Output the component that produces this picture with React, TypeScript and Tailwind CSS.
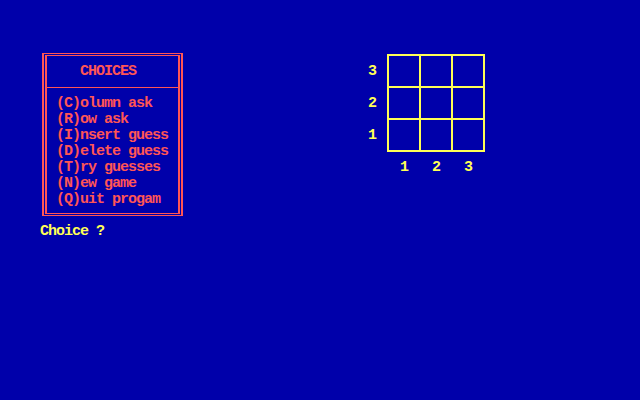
import React from 'react';

const menu = [
  '(C)olumn ask',
  '(R)ow ask',
  '(I)nsert guess',
  '(D)elete guess',
  '(T)ry guesses',
  '(N)ew game',
  '(Q)uit progam',
];

const App = () => {
  return (
    <div
      className="w-[640px] h-[400px] bg-[#0000aa] flex items-start overflow-hidden text-[15px] leading-[16px] tracking-[-1px] font-bold"
      style={{ fontFamily: '"Liberation Mono", "DejaVu Sans Mono", monospace' }}
    >
      {/* menu column */}
      <div className="w-[184px] pl-[40px] pt-[53px] flex flex-col">
        <div className="ml-[2px] w-[141px] h-[163px] border-x-2 border-y border-[#ff5555] p-[1px]">
          <div className="w-full h-full border-x-2 border-y border-[#ff5555] text-[#ff5555]">
            <div className="pt-[8px] pl-[33px] whitespace-pre">CHOICES</div>
            <div className="mt-[7px] h-px bg-[#ff5555]" />
            <div className="pt-[8px] pl-[9px] flex flex-col">
              {menu.map((item) => (
                <div key={item} className="whitespace-pre">{item}</div>
              ))}
            </div>
          </div>
        </div>
        <div className="mt-[8px] text-[#ffff55] whitespace-pre">Choice ?</div>
      </div>

      {/* board */}
      <div className="ml-[184px] pt-[54px] flex flex-col text-[#ffff55]">
        <div className="flex items-start">
          <div className="w-[19px] pt-[10px] flex flex-col">
            {['3', '2', '1'].map((n) => (
              <div key={n} className="h-[32px]">{n}</div>
            ))}
          </div>
          <div className="grid grid-cols-[30px_30px_30px] grid-rows-[30px_30px_30px] gap-[2px] p-[2px] bg-[#ffff55]">
            {Array.from({ length: 9 }).map((_, i) => (
              <div key={i} className="bg-[#0000aa]" />
            ))}
          </div>
        </div>
        <div className="pl-[32px] flex">
          {['1', '2', '3'].map((n) => (
            <div key={n} className="w-[32px]">{n}</div>
          ))}
        </div>
      </div>
    </div>
  );
};

export default App;
